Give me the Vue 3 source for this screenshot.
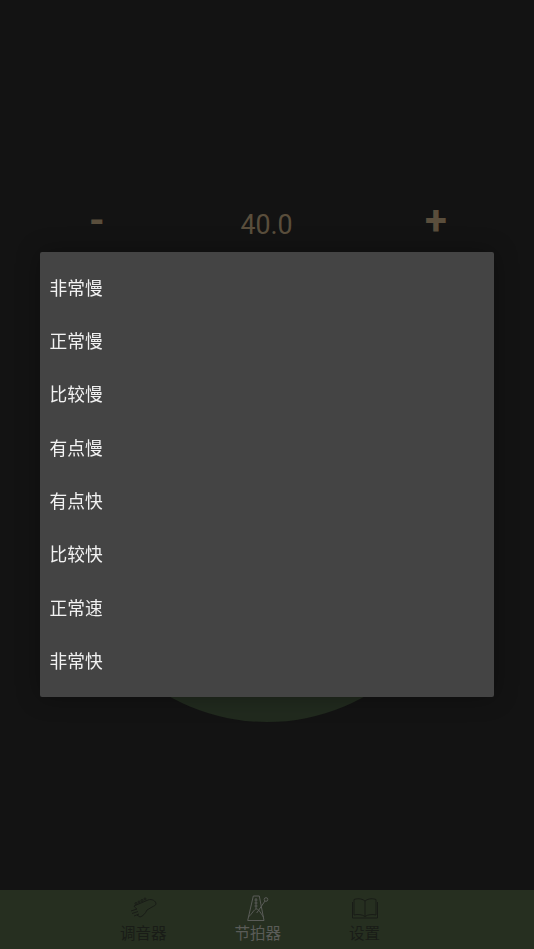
<script setup>
const items = ['非常慢', '正常慢', '比较慢', '有点慢', '有点快', '比较快', '正常速', '非常快']
</script>

<template>
  <div class="page">
    <main class="stage">
      <div class="stepper">
        <span class="step minus">-</span>
        <span class="value">40.0</span>
        <span class="step plus">+</span>
      </div>
      <div class="dial"></div>
    </main>

    <nav class="tabs">
      <div class="tab">
        <svg class="icon" viewBox="0 0 28 26" fill="none" stroke="#191c17" stroke-width="1">
          <path d="M5 11 L19 5 C23 3.500 27 6 27 9 C27 10 25 11 23 12 L18 15 C16 19 14 21 11 22 L8 20" />
          <path d="M5 11 C6 13 7 13 8 14" />
          <circle cx="7" cy="8.500" r="1" /><circle cx="10" cy="7" r="1" /><circle cx="13" cy="5.500" r="1" /><circle cx="16" cy="4" r="1" />
          <path d="M2 16 L8 14 M3 18.500 L9 16.500 M5 21 L10 19" />
        </svg>
        <span class="label">调音器</span>
      </div>
      <div class="tab active">
        <svg class="icon" viewBox="0 0 28 26" fill="none" stroke="#5a5c58" stroke-width="1">
          <path d="M9.300 1 H15.300 L20 25.500 H3.700 Z" />
          <path d="M4.500 22 C8 19 10 14 12.500 14 C15 14 17 19 19.500 22" />
          <path d="M12 3 V14 M10.500 5 H13.500 M10.500 8 H13.500 M10.500 11 H13.500" />
          <path d="M12.700 18 L21 6" />
          <circle cx="22" cy="4.500" r="1.800" />
        </svg>
        <span class="label">节拍器</span>
      </div>
      <div class="tab">
        <svg class="icon" viewBox="0 0 28 26" fill="none" stroke="#191c17" stroke-width="1">
          <path d="M14 6 C10 3 6 3.500 3 4.500 V20 C7 19 11 19.500 14 21.500 C17 19.500 21 19 25 20 V4.500 C22 3.500 18 3 14 6 Z M14 6 V21.500" />
          <path d="M1.500 7 V23 H26.500 V7" />
        </svg>
        <span class="label">设置</span>
      </div>
    </nav>

    <div class="menu">
      <div v-for="item in items" :key="item" class="item">{{ item }}</div>
    </div>
  </div>
</template>

<style scoped>
.page {
  position: relative;
  width: 534px;
  height: 949px;
  background: #131313;
  display: flex;
  flex-direction: column;
  overflow: hidden;
  font-family: Roboto, "Noto Sans CJK SC", sans-serif;
}
.stage {
  flex: 1;
  padding-top: 197px;
  overflow: hidden;
}
.stepper {
  display: flex;
  justify-content: space-between;
  align-items: center;
  padding: 0 87px 0 86px;
  height: 48px;
  color: #5a4e3c;
}
.step {
  font-size: 40px;
  font-weight: 700;
  width: 22px;
  text-align: center;
  line-height: 48px;
}
.value {
  font-size: 26.800px;
  padding-top: 7px;
}
.dial {
  margin: 77px 0 0 67px;
  width: 400px;
  height: 400px;
  border-radius: 50%;
  background: #212a1e;
}
.tabs {
  height: 59px;
  background: #262f20;
  display: flex;
  justify-content: center;
  gap: 68px;
  padding-right: 34px;
}
.tab {
  display: flex;
  flex-direction: column;
  align-items: center;
  color: #191c17;
}
.tab.active {
  color: #5a5c58;
}
.icon {
  width: 28px;
  height: 26px;
  margin-top: 5px;
}
.label {
  font-size: 15.500px;
  line-height: 20px;
  white-space: nowrap;
  margin-top: 3px;
}
.menu {
  position: absolute;
  left: 40px;
  top: 252px;
  width: 454px;
  height: 445px;
  box-sizing: border-box;
  padding: 10.500px 0 7.500px;
  background: #444444;
  border-radius: 2px;
  box-shadow: 0 0 24px rgba(0, 0, 0, 0.3);
  display: flex;
  flex-direction: column;
}
.item {
  height: 53.400px;
  line-height: 53.400px;
  padding-left: 9.500px;
  font-size: 17.700px;
  color: #f2f2f2;
  will-change: transform;
}
</style>
